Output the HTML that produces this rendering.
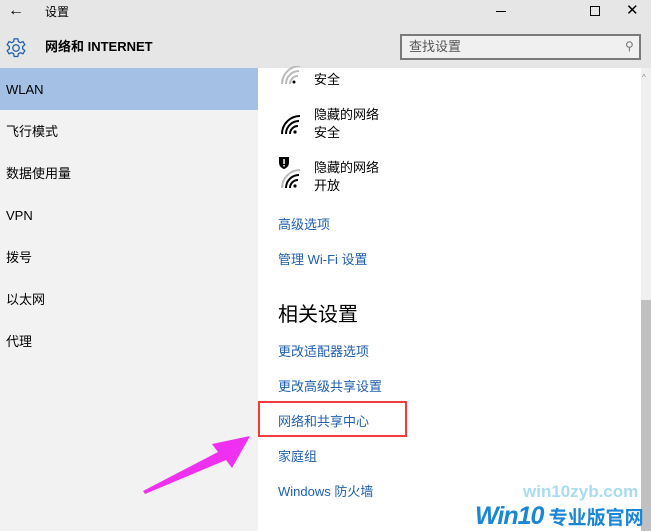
<!DOCTYPE html>
<html><head><meta charset="utf-8"><style>
*{margin:0;padding:0;box-sizing:border-box}
body{width:651px;height:531px;overflow:hidden;position:relative;background:#fff;font-family:"Liberation Sans","Noto Sans CJK SC",sans-serif;font-size:13px;line-height:16px;color:#000}
.a{position:absolute;white-space:nowrap}
.lnk{color:#1f5fae;font-size:13px}
.nav{left:6px;font-size:13px}
</style></head><body>
<div class="a" style="left:0;top:0;width:651px;height:68px;background:#e6e6e6"></div>
<div class="a" style="left:0;top:68px;width:258px;height:463px;background:#f2f2f2"></div>
<div class="a" style="left:0;top:68px;width:258px;height:42px;background:#a4c0e4"></div>
<div class="a" style="left:8px;top:3px;font-size:16px">&#8592;</div>
<div class="a" style="left:45px;top:4px;font-size:12px">设置</div>
<div class="a" style="left:496px;top:11px;width:10px;height:1px;background:#000"></div>
<div class="a" style="left:590px;top:6px;width:10px;height:10px;border:1px solid #000"></div>
<div class="a" style="left:626px;top:3px;font-size:15px">&#10005;</div>
<svg class="a" style="left:5px;top:37px" width="22" height="22" viewBox="0 0 24 24" fill="none" stroke="#1f5fae" stroke-width="1.4"><circle cx="12" cy="12" r="3.5"/><path d="M10 2h4l.6 3 2.2 1.2 2.8-1.2 2 3.4-2.3 2 0 2.5 2.3 2-2 3.4-2.8-1.2-2.2 1.2-.6 3h-4l-.6-3-2.2-1.2-2.8 1.2-2-3.4 2.3-2 0-2.5-2.3-2 2-3.4 2.8 1.2L9.4 5z"/></svg>
<div class="a" style="left:45px;top:39px;font-size:13px;font-weight:bold">网络和 INTERNET</div>
<div class="a" style="left:400px;top:34px;width:241px;height:26px;border:2px solid #7a7a7a;background:#f0f0f0"></div>
<div class="a" style="left:409px;top:39px;color:#555">查找设置</div>
<div class="a" style="left:625px;top:38px;color:#777;font-size:12px">&#9906;</div>
<div class="a nav" style="top:82px">WLAN</div>
<div class="a nav" style="top:124px">飞行模式</div>
<div class="a nav" style="top:166px">数据使用量</div>
<div class="a nav" style="top:208px">VPN</div>
<div class="a nav" style="top:250px">拨号</div>
<div class="a nav" style="top:292px">以太网</div>
<div class="a nav" style="top:334px">代理</div>
<svg class="a" style="left:280px;top:66px" width="24" height="20" viewBox="0 0 24 20" fill="none" stroke="#bbb" stroke-width="2"><path d="M2 18A18 18 0 0 1 20 0"/><path d="M6 18A13 13 0 0 1 19 5"/><path d="M10 18A8 8 0 0 1 18 10"/><circle cx="14" cy="16" r="1.5" fill="#000" stroke="none"/></svg>
<div class="a" style="left:314px;top:72px">安全</div>
<svg class="a" style="left:280px;top:112px" width="24" height="24" viewBox="0 0 24 24" fill="none" stroke="#000" stroke-width="2"><path d="M2 22A18 18 0 0 1 20 4"/><path d="M6 22A13 13 0 0 1 19 9"/><path d="M10 22A8 8 0 0 1 18 14"/><circle cx="15" cy="20" r="1.6" fill="#000" stroke="none"/></svg>
<div class="a" style="left:314px;top:107px">隐藏的网络</div>
<div class="a" style="left:314px;top:125px">安全</div>
<svg class="a" style="left:276px;top:156px" width="30" height="34" viewBox="0 0 30 34" fill="none"><path d="M3 1h10v5c0 4-2 6-5 7-3-1-5-3-5-7z" fill="#000"/><rect x="7.3" y="3" width="1.5" height="5" fill="#fff"/><rect x="7.3" y="9" width="1.5" height="1.5" fill="#fff"/><g stroke="#bbb" stroke-width="2"><path d="M6 32A18 18 0 0 1 24 14"/></g><g stroke="#000" stroke-width="2"><path d="M10 32A13 13 0 0 1 23 19"/><path d="M14 32A8 8 0 0 1 22 24"/></g><circle cx="19" cy="30" r="1.6" fill="#000"/></svg>
<div class="a" style="left:314px;top:160px">隐藏的网络</div>
<div class="a" style="left:314px;top:178px">开放</div>
<div class="a lnk" style="left:278px;top:217px">高级选项</div>
<div class="a lnk" style="left:278px;top:252px">管理 Wi-Fi 设置</div>
<div class="a" style="left:278px;top:303px;font-size:20px;line-height:24px">相关设置</div>
<div class="a lnk" style="left:278px;top:344px">更改适配器选项</div>
<div class="a lnk" style="left:278px;top:379px">更改高级共享设置</div>
<div class="a" style="left:258px;top:401px;width:149px;height:36px;border:2px solid #f03c3c"></div>
<div class="a lnk" style="left:278px;top:414px">网络和共享中心</div>
<div class="a lnk" style="left:278px;top:449px">家庭组</div>
<div class="a lnk" style="left:278px;top:484px">Windows 防火墙</div>
<svg class="a" style="left:140px;top:430px" width="115" height="65" viewBox="0 0 115 65"><path d="M3 61L78 22L72 14L110 6L92 38L86 30L5 64z" fill="#f030f0"/></svg>
<div class="a" style="left:641px;top:68px;width:10px;height:463px;background:#f0f0f0"></div>
<div class="a" style="left:641px;top:300px;width:10px;height:231px;background:#c0c0c0"></div>
<div class="a" style="left:642px;top:70px;font-size:8px;color:#888">^</div>
<div class="a" style="left:523px;top:482px;font-size:17px;line-height:20px;font-weight:bold;color:#a8dcee">win10zyb.com</div>
<div class="a" style="left:475px;top:503px;font-size:25px;line-height:27px;font-weight:bold;font-style:italic;color:#1a86d6;letter-spacing:-1px">Win10<span style="font-style:normal;font-size:19px;letter-spacing:0"> 专业版官网</span></div>
</body></html>
